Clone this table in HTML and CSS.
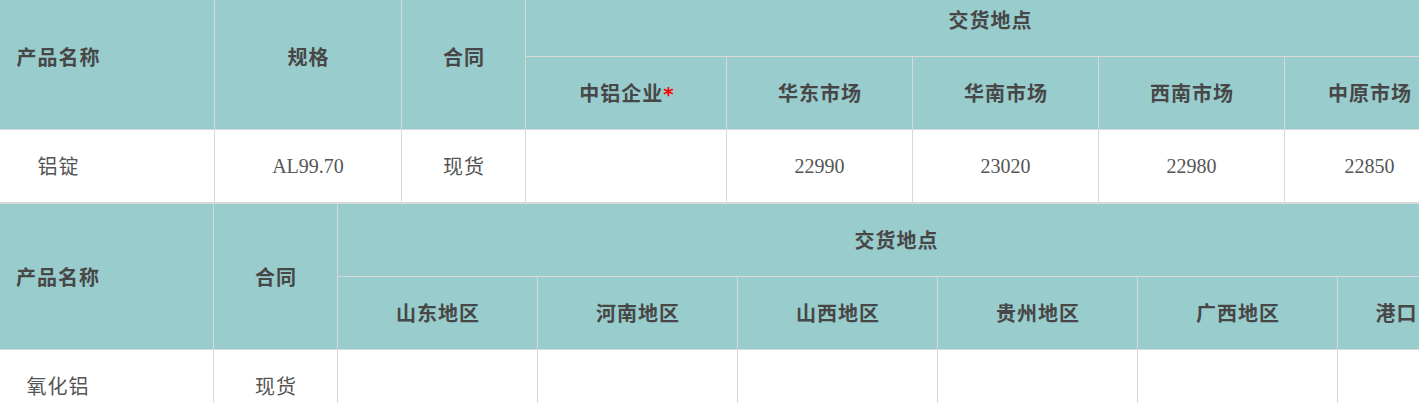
FILE: index.html
```html
<!DOCTYPE html>
<html lang="zh-CN">
<head>
<meta charset="utf-8">
<title>价格表</title>
<link rel="stylesheet" href="styles.css">
</head>
<body>
<div class="viewport">
  <div class="scroller">
    <table class="price t1">
      <colgroup>
        <col class="c-name1"><col class="c-spec"><col class="c-contract"><col class="c-w201"><col class="c-w186"><col class="c-w186"><col class="c-w186"><col class="c-w170">
      </colgroup>
      <thead>
        <tr>
          <th rowspan="2">产品名称</th>
          <th rowspan="2">规格</th>
          <th rowspan="2">合同</th>
          <th colspan="5">交货地点</th>
        </tr>
        <tr>
          <th>中铝企业<span class="req">*</span></th>
          <th>华东市场</th>
          <th>华南市场</th>
          <th>西南市场</th>
          <th>中原市场</th>
        </tr>
      </thead>
      <tbody>
        <tr>
          <td>铝锭</td>
          <td class="num">AL99.70</td>
          <td>现货</td>
          <td></td>
          <td class="num">22990</td>
          <td class="num">23020</td>
          <td class="num">22980</td>
          <td class="num">22850</td>
        </tr>
      </tbody>
    </table>
    <table class="price t2">
      <colgroup>
        <col class="c-name2"><col class="c-contract"><col class="c-w200"><col class="c-w200"><col class="c-w200"><col class="c-w200"><col class="c-w200"><col class="c-w117">
      </colgroup>
      <thead>
        <tr>
          <th rowspan="2">产品名称</th>
          <th rowspan="2">合同</th>
          <th colspan="6">交货地点</th>
        </tr>
        <tr>
          <th>山东地区</th>
          <th>河南地区</th>
          <th>山西地区</th>
          <th>贵州地区</th>
          <th>广西地区</th>
          <th>港口</th>
        </tr>
      </thead>
      <tbody>
        <tr>
          <td>氧化铝</td>
          <td>现货</td>
          <td></td>
          <td></td>
          <td></td>
          <td></td>
          <td></td>
          <td></td>
        </tr>
      </tbody>
    </table>
  </div>
</div>
</body>
</html>
```
FILE: styles.css
```css
html, body {
  margin: 0;
  padding: 0;
  overflow: hidden;
  background: #ffffff;
}

.viewport {
  width: 1419px;
  height: 403px;
  overflow: hidden;
}

.scroller {
  margin-left: -99px;
  margin-top: -17px;
  width: 1554px;
}

.price {
  table-layout: fixed;
  width: 1554px;
  border-collapse: separate;
  border-spacing: 0;
  border-top: 1px solid #d8d8d8;
  border-left: 1px solid #d8d8d8;
  font-family: "Noto Sans CJK SC", "Noto Sans", sans-serif;
  font-size: 20px;
  color: #4d4d4d;
}

.price th,
.price td {
  height: 72px;
  padding: 0 0 0 1px;
  text-align: center;
  vertical-align: middle;
  border-right: 1px solid #d8d8d8;
  border-bottom: 1px solid #d8d8d8;
  line-height: 24px;
  letter-spacing: 1px;
  white-space: nowrap;
  overflow: hidden;
}

.price th {
  background: #99cccc;
  font-weight: 700;
  color: #474747;
}

.price td {
  background: #ffffff;
  font-weight: 400;
  color: #555555;
}

.price td.num {
  font-family: "Liberation Serif", serif;
  font-size: 20px;
  letter-spacing: 0;
  padding: 0;
}

.req {
  color: #ff0000;
  font-family: "DejaVu Sans", sans-serif;
  font-size: 20px;
  font-weight: 700;
  letter-spacing: 0;
}

.c-name1 { width: 313px; }
.c-name2 { width: 312px; }
.c-spec { width: 187px; }
.c-contract { width: 124px; }
.c-w201 { width: 201px; }
.c-w186 { width: 186px; }
.c-w170 { width: 170px; }
.c-w200 { width: 200px; }
.c-w117 { width: 117px; }
```
